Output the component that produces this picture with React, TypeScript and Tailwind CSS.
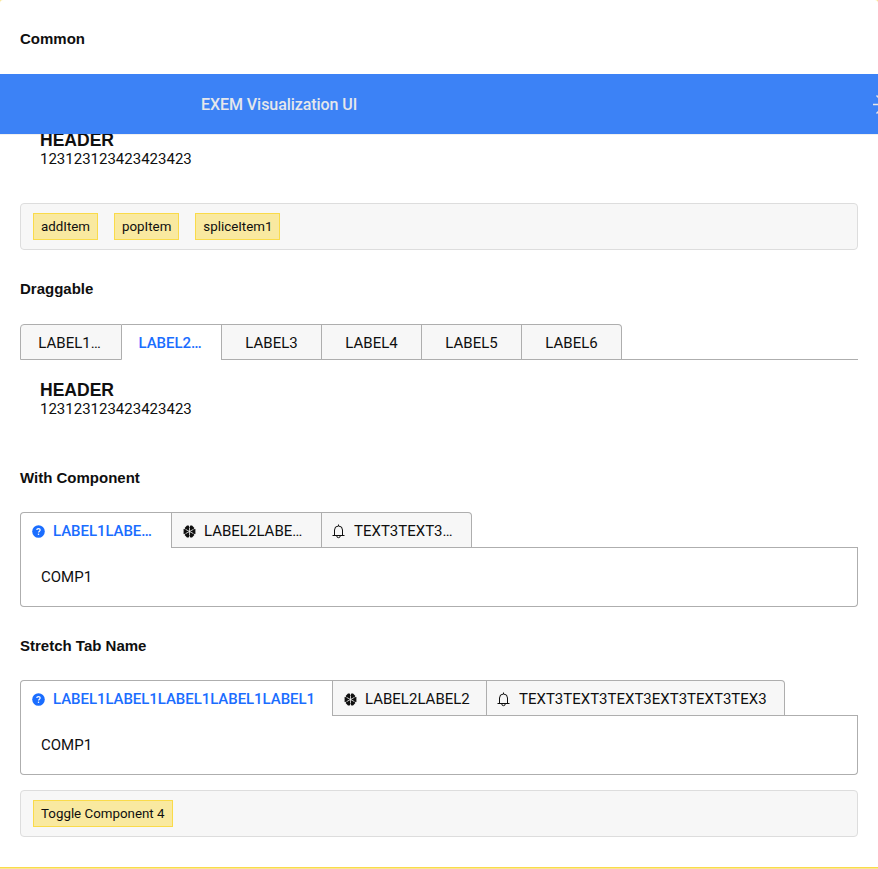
import { useState, type ReactNode } from "react";

function HelpIcon() {
  return (
    <svg viewBox="0 0 13 13" className="size-[13px] shrink-0">
      <circle cx="6.5" cy="6.5" r="6.3" fill="currentColor" />
      <path d="M4.8 5.1C4.8 3 8.2 3 8.2 5.1 8.2 6.2 6.5 6.2 6.5 7.6" fill="none" stroke="#fff" strokeWidth="1.2" />
      <rect x="5.85" y="8.6" width="1.3" height="1.3" fill="#fff" />
    </svg>
  );
}

function WheelIcon() {
  return (
    <svg viewBox="0 0 13 13" className="size-[13px] shrink-0">
      <path d="M4 .5h5l3.4 3.6v4.8L9 12.5H4L.6 8.9V4.1z" fill="currentColor" />
      <path
        d="M6.5 2.6v7.8M3 4.6l7 3.8M10 4.6L3 8.4"
        fill="none"
        stroke="#f7f7f7"
        strokeWidth=".8"
      />
      <path
        d="M5.6 0L6.5 2.8 7.4 0zM5.6 13l.9-2.8.9 2.8zM0 3.4l3 1.3L.9 2.2zM13 3.4l-3 1.3 2.1-2.5zM0 9.6l3-1.3L.9 10.8zM13 9.6l-3-1.3 2.1 2.5z"
        fill="#f7f7f7"
      />
    </svg>
  );
}

function BellIcon() {
  return (
    <svg viewBox="0 0 13 15" className="-ml-px mr-px h-[15px] w-[13px] shrink-0" fill="none" stroke="currentColor">
      <path d="M.5 11.5h12M2.5 11.5V6a4 4 0 0 1 8 0v5.5M6.5 2V.5M4.8 12a1.7 1.7 0 0 0 3.4 0" />
    </svg>
  );
}

function Heading({ children }: { children: ReactNode }) {
  return <h4 className="font-['Liberation_Sans',Arial,sans-serif] text-[15px] leading-[18px] font-bold">{children}</h4>;
}

function HeaderContent() {
  return (
    <div className="pl-5">
      <h3 className="font-['Liberation_Sans',Arial,sans-serif] text-[17.55px] leading-5 font-bold">HEADER</h3>
      <p className="leading-[18px]">123123123423423423</p>
    </div>
  );
}

function ButtonBar({ labels }: { labels: string[] }) {
  return (
    <div className="flex h-[47px] items-center gap-4 rounded border border-[#dddddd] bg-[#f7f7f7] px-3">
      {labels.map((label) => (
        <button
          key={label}
          className="h-[27px] border border-[#fadb4a] bg-[#f9e9a0] px-[7px] text-[13.3333px] leading-[25px] font-normal"
        >
          {label}
        </button>
      ))}
    </div>
  );
}

type Tab = { label: string; width: string; icon?: ReactNode };

function Tabs({ tabs, initial }: { tabs: Tab[]; initial: number }) {
  const [active, setActive] = useState(initial);
  return (
    <div className="flex h-9">
      {tabs.map((tab, i) => (
        <button
          key={tab.label}
          onClick={() => setActive(i)}
          className={`flex h-9 items-center border-t border-r border-[#aeaeae] pt-[2px] ${tab.width} ${
            tab.icon ? "gap-2 pl-[11px]" : "justify-center"
          } ${!tab.icon && tab.label.endsWith("…") ? "pr-[3px]" : ""} ${i === 0 ? "rounded-tl border-l" : ""} ${
            i === tabs.length - 1 ? "rounded-tr" : ""
          } ${i === active ? "bg-white pb-px font-medium tracking-[-0.06px] text-[#1a6dff]" : "border-b bg-[#f7f7f7]"}`}
        >
          {tab.icon}
          <span>{tab.label}</span>
        </button>
      ))}
      <div className="flex-1 border-b border-[#aeaeae]" />
    </div>
  );
}

function Panel() {
  return (
    <div className="h-[59px] rounded-b border border-t-0 border-[#aeaeae] px-5 pt-5 leading-[18px]">COMP1</div>
  );
}

const draggable: Tab[] = [
  { label: "LABEL1…", width: "w-[102px]" },
  { label: "LABEL2…", width: "w-[100px]" },
  { label: "LABEL3", width: "w-[100px]" },
  { label: "LABEL4", width: "w-[100px]" },
  { label: "LABEL5", width: "w-[100px]" },
  { label: "LABEL6", width: "w-[100px]" },
];

const withComponent: Tab[] = [
  { label: "LABEL1LABE…", width: "w-[152px]", icon: <HelpIcon /> },
  { label: "LABEL2LABE…", width: "w-[150px]", icon: <WheelIcon /> },
  { label: "TEXT3TEXT3…", width: "w-[150px]", icon: <BellIcon /> },
];

const stretched: Tab[] = [
  { label: "LABEL1LABEL1LABEL1LABEL1LABEL1", width: "w-[313px]", icon: <HelpIcon /> },
  { label: "LABEL2LABEL2", width: "w-[154px]", icon: <WheelIcon /> },
  { label: "TEXT3TEXT3TEXT3EXT3TEXT3TEX3", width: "w-[298px]", icon: <BellIcon /> },
];

export default function App() {
  return (
    <div className="h-[869px] w-full overflow-hidden bg-[#fae792] font-[Roboto,sans-serif] text-[15px] text-[#0f0f0f]">
      <main className="h-[868px] overflow-hidden rounded-t-[3px] border-b border-[#fadb4a] bg-white">
        <div className="h-[74px] px-5 pt-[30px]">
          <Heading>Common</Heading>
        </div>
        <header className="relative z-10 flex h-[60px] items-center justify-between bg-[#3c82f6] pl-[201px] text-[#e5e7eb] shadow-[0_1px_0_rgba(0,0,0,0.06)]">
          <span className="pt-px text-base font-medium tracking-[-0.06px]">EXEM Visualization UI</span>
          <svg viewBox="0 0 5 24" className="h-6 w-[5px]" fill="none" stroke="currentColor" strokeWidth="1.5">
            <path d="M0 12.5h5M3.5 3.5L5.5 5.5M3.5 21.5l2-2" />
          </svg>
        </header>
        <div className="px-5">
          <div className="-mt-1 h-[73px]">
            <HeaderContent />
          </div>
          <ButtonBar labels={["addItem", "popItem", "spliceItem1"]} />
          <div className="h-[74px] pt-[30px]">
            <Heading>Draggable</Heading>
          </div>
          <Tabs tabs={draggable} initial={1} />
          <div className="h-[108px] pt-5">
            <HeaderContent />
          </div>
          <div className="h-11 pt-px">
            <Heading>With Component</Heading>
          </div>
          <Tabs tabs={withComponent} initial={0} />
          <Panel />
          <div className="h-[73px] pt-[30px]">
            <Heading>Stretch Tab Name</Heading>
          </div>
          <Tabs tabs={stretched} initial={0} />
          <Panel />
          <div className="pt-[15px]">
            <ButtonBar labels={["Toggle Component 4"]} />
          </div>
        </div>
      </main>
    </div>
  );
}
